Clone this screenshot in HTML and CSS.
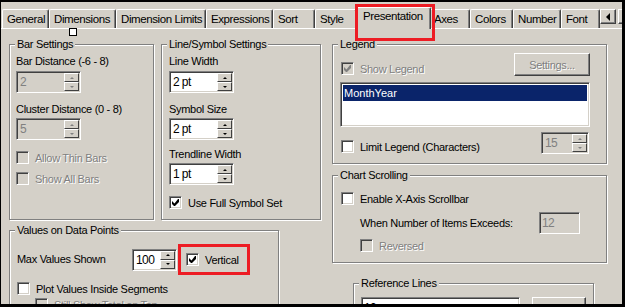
FILE: index.html
```html
<!DOCTYPE html>
<html lang="en">
<head>
    <meta charset="UTF-8">
    <title>Chart Properties - Presentation</title>
    <link rel="stylesheet" href="styles.css">
</head>
<body>
    <div class="window">
        <div class="tabs">
            <div class="tab">General</div>
            <div class="tab">Dimensions</div>
            <div class="tab">Dimension Limits</div>
            <div class="tab">Expressions</div>
            <div class="tab">Sort</div>
            <div class="tab">Style</div>
            <div class="tab active">Presentation</div>
            <div class="tab">Axes</div>
            <div class="tab">Colors</div>
            <div class="tab">Number</div>
            <div class="tab">Font</div>
            <div class="tab-scroll">
                <span class="scroll-btn"><span class="arrow-left"></span></span>
                <span class="scroll-btn"><span class="arrow-right"></span></span>
            </div>
        </div>
        <span class="handle"></span>

        <div class="panel">
            <div class="col-left">
                <div class="row-top">
                    <div class="group group-bar">
                        <span class="group-title">Bar Settings</span>
                        <div class="field-label">Bar Distance (-6 - 8)</div>
                        <div class="spin disabled mt3">
                            <span class="spin-value">2</span>
                            <span class="spin-btns"><span class="spin-up"></span><span class="spin-down"></span></span>
                        </div>
                        <div class="field-label mt10">Cluster Distance (0 - 8)</div>
                        <div class="spin disabled mt2">
                            <span class="spin-value">5</span>
                            <span class="spin-btns"><span class="spin-up"></span><span class="spin-down"></span></span>
                        </div>
                        <label class="check disabled mt11"><span class="box"></span>Allow Thin Bars</label>
                        <label class="check disabled mt8"><span class="box"></span>Show All Bars</label>
                    </div>

                    <div class="group group-line">
                        <span class="group-title">Line/Symbol Settings</span>
                        <div class="field-label">Line Width</div>
                        <div class="spin mt3">
                            <span class="spin-value">2 pt</span>
                            <span class="spin-btns"><span class="spin-up"></span><span class="spin-down"></span></span>
                        </div>
                        <div class="field-label mt10">Symbol Size</div>
                        <div class="spin mt2">
                            <span class="spin-value">2 pt</span>
                            <span class="spin-btns"><span class="spin-up"></span><span class="spin-down"></span></span>
                        </div>
                        <div class="field-label mt8">Trendline Width</div>
                        <div class="spin mt2">
                            <span class="spin-value">1 pt</span>
                            <span class="spin-btns"><span class="spin-up"></span><span class="spin-down"></span></span>
                        </div>
                        <label class="check mt11">
                            <span class="box"><svg class="tick" viewBox="0 0 7 7" width="7" height="7"><path d="M0 2v3l2 2h1l4-4V0h-1L2.5 4.5z"/></svg></span>Use Full Symbol Set
                        </label>
                    </div>
                </div>

                <div class="group group-values">
                    <span class="group-title">Values on Data Points</span>
                    <div class="values-row">
                        <span class="values-label">Max Values Shown</span>
                        <div class="spin spin-small">
                            <span class="spin-value">100</span>
                            <span class="spin-btns"><span class="spin-up"></span><span class="spin-down"></span></span>
                        </div>
                        <label class="check highlight">
                            <span class="box"><svg class="tick" viewBox="0 0 7 7" width="7" height="7"><path d="M0 2v3l2 2h1l4-4V0h-1L2.5 4.5z"/></svg></span>Vertical
                        </label>
                    </div>
                    <label class="check mt7"><span class="box"></span>Plot Values Inside Segments</label>
                    <label class="check disabled indent mt3"><span class="box"></span>Still Show Total on Top</label>
                </div>
            </div>

            <div class="col-right">
                <div class="group group-legend">
                    <span class="group-title">Legend</span>
                    <div class="legend-row">
                        <label class="check disabled legend-check">
                            <span class="box"><svg class="tick" viewBox="0 0 7 7" width="7" height="7"><path d="M0 2v3l2 2h1l4-4V0h-1L2.5 4.5z"/></svg></span>Show Legend
                        </label>
                        <button class="btn btn-settings" disabled>Settings...</button>
                    </div>
                    <div class="listbox">
                        <div class="list-item selected">MonthYear</div>
                    </div>
                    <div class="legend-row limit-row">
                        <label class="check limit-check"><span class="box"></span>Limit Legend (Characters)</label>
                        <div class="spin disabled spin-limit">
                            <span class="spin-value">15</span>
                            <span class="spin-btns"><span class="spin-up"></span><span class="spin-down"></span></span>
                        </div>
                    </div>
                </div>

                <div class="group group-scroll">
                    <span class="group-title">Chart Scrolling</span>
                    <label class="check"><span class="box"></span>Enable X-Axis Scrollbar</label>
                    <div class="scroll-row">
                        <span>When Number of Items Exceeds:</span>
                        <span class="textbox disabled items-box">12</span>
                    </div>
                    <label class="check disabled sub-check"><span class="box"></span>Reversed</label>
                </div>

                <div class="group group-ref">
                    <span class="group-title">Reference Lines</span>
                    <div class="ref-row">
                        <span class="textbox ref-box">10</span>
                        <button class="btn btn-add">Add</button>
                    </div>
                </div>
            </div>
        </div>
    </div>
</body>
</html>
```

FILE: styles.css
```css
* {
    box-sizing: border-box;
}
body {
    margin: 0;
    font-family: "Liberation Sans", Arial, sans-serif;
    font-size: 11px;
    letter-spacing: -0.3px;
    color: #000;
    background: #000;
}
.window {
    position: relative;
    width: 625px;
    height: 307px;
    overflow: hidden;
    background: #d4d0c8;
    border-style: solid;
    border-color: #000;
    border-width: 2px 3px 3px 1px;
}

/* tab strip */
.tabs {
    display: flex;
    align-items: flex-end;
    height: 26px;
    padding-left: 1px;
}
.tab {
    flex: none;
    height: 19px;
    padding: 0 0 0 4px;
    overflow: hidden;
    white-space: nowrap;
    line-height: 18px;
    font-size: 11.5px;
    letter-spacing: -0.4px;
    border-left: 1px solid #fff;
    border-top: 1px solid #fff;
    border-right: 1px solid #404040;
    border-radius: 2px 2px 0 0;
    box-shadow: inset -1px 0 #808080;
}
/* tab widths as drawn by the tab control */
.tab:nth-child(1) { width: 47px; }
.tab:nth-child(2) { width: 67px; }
.tab:nth-child(3) { width: 90px; }
.tab:nth-child(4) { width: 67px; }
.tab:nth-child(5) { width: 42px; }
.tab:nth-child(6) { width: 42px; }
.tab:nth-child(8) { width: 41px; }
.tab:nth-child(9) { width: 43px; }
.tab:nth-child(10) { width: 48px; }
.tab:nth-child(11) { width: 39px; }
.tab.active {
    position: relative;
    z-index: 1;
    width: 76px;
    height: 22px;
    margin: 0 -2px -1px;
    padding: 0 0 0 7px;
    overflow: visible;
    line-height: 16px;
    background: #d4d0c8;
}
.tab.active::after {
    content: "";
    position: absolute;
    left: -1px;
    top: -4px;
    width: 74px;
    height: 31px;
    border: 3px solid #ed1c24;
}
.tab-scroll {
    flex: none;
    display: flex;
    gap: 2px;
    align-self: flex-start;
    margin: 7px 0 0 0;
}
.scroll-btn {
    display: flex;
    align-items: center;
    justify-content: center;
    width: 16px;
    height: 15px;
    background: #d4d0c8;
    border: 1px solid;
    border-color: #fff #404040 #404040 #fff;
    box-shadow: inset -1px -1px #808080;
}
.arrow-left {
    border-top: 4px solid transparent;
    border-bottom: 4px solid transparent;
    border-right: 4px solid #000;
}
.arrow-right {
    border-top: 4px solid transparent;
    border-bottom: 4px solid transparent;
    border-left: 4px solid #000;
}
.handle {
    position: absolute;
    left: 68px;
    top: 26px;
    width: 8px;
    height: 8px;
    background: #fff;
    border: 1px solid #000;
    z-index: 2;
}

/* page */
.panel {
    display: flex;
    gap: 11px;
    padding: 15px 0 0 8px;
    border-top: 1px solid #fff;
}
.col-left {
    width: 312px;
    flex: none;
}
.col-right {
    width: 275px;
    flex: none;
}
.row-top {
    display: flex;
    gap: 7px;
}

/* group boxes */
.group {
    position: relative;
    border: 1px solid #808080;
    box-shadow: inset 1px 1px #fff, 1px 1px #fff;
}
.group-title {
    position: absolute;
    top: -7px;
    left: 5px;
    padding: 0 2px;
    line-height: 13px;
    background: #d4d0c8;
    white-space: nowrap;
}
.group-bar {
    width: 145px;
    height: 176px;
    padding: 10px 0 0 6px;
}
.group-line {
    width: 160px;
    height: 176px;
    padding: 10px 0 0 7px;
}
.group-values {
    width: 270px;
    height: 90px;
    margin-top: 10px;
    padding: 13px 0 0 7px;
}
.group-legend {
    height: 120px;
    padding: 8px 16px 0 8px;
}
.group-scroll {
    height: 88px;
    margin-top: 11px;
    padding: 16px 26px 0 8px;
}
.group-ref {
    width: 241px;
    height: 60px;
    margin: 20px 0 0 21px;
    padding: 13px 0 0 7px;
}

.mt2 { margin-top: 2px; }
.mt3 { margin-top: 3px; }
.mt7 { margin-top: 7px; }
.mt8 { margin-top: 8px; }
.mt10 { margin-top: 10px; }
.mt11 { margin-top: 11px; }

.field-label {
    line-height: 13px;
    white-space: nowrap;
}

/* checkboxes */
.check {
    display: flex;
    align-items: center;
    gap: 6px;
    height: 13px;
    white-space: nowrap;
}
.box {
    flex: none;
    display: flex;
    align-items: center;
    justify-content: center;
    width: 13px;
    height: 13px;
    background: #fff;
    border: 1px solid;
    border-color: #808080 #fff #fff #808080;
    box-shadow: inset 1px 1px #404040, inset -1px -1px #d4d0c8;
}
.tick {
    display: block;
    fill: #000;
}
.check.disabled {
    color: #808080;
    text-shadow: 1px 1px #fff;
}
.check.disabled .box {
    background: #d4d0c8;
}
.check.disabled .tick {
    fill: #808080;
}

/* spin / edit boxes */
.spin,
.textbox {
    display: flex;
    width: 65px;
    height: 22px;
    padding: 2px;
    background: #fff;
    border: 1px solid;
    border-color: #808080 #fff #fff #808080;
    box-shadow: inset 1px 1px #404040, inset -1px -1px #d4d0c8;
}
.spin-value,
.textbox {
    font-size: 12px;
    letter-spacing: -0.6px;
    line-height: 17px;
}
.spin-value {
    flex: 1;
    padding-left: 1px;
}
.spin.disabled,
.textbox.disabled {
    background: #d4d0c8;
    color: #808080;
}
.spin-btns {
    display: flex;
    flex-direction: column;
    width: 15px;
    height: 18px;
    margin: -1px -1px 0 0;
}
.spin-up,
.spin-down {
    display: flex;
    align-items: center;
    justify-content: center;
    height: 9px;
    background: #d4d0c8;
    border: 1px solid;
    border-color: #fff #404040 #404040 #fff;
}
.spin-up::after {
    content: "";
    border-left: 2px solid transparent;
    border-right: 2px solid transparent;
    border-bottom: 2px solid #000;
}
.spin-down::after {
    content: "";
    border-left: 2px solid transparent;
    border-right: 2px solid transparent;
    border-top: 2px solid #000;
}
.spin.disabled .spin-up::after {
    border-bottom-color: #808080;
}
.spin.disabled .spin-down::after {
    border-top-color: #808080;
}

/* values on data points */
.values-row {
    display: flex;
    align-items: center;
    height: 31px;
}
.values-label {
    width: 115px;
    line-height: 13px;
}
.spin-small {
    width: 45px;
}
.check.highlight {
    width: 72px;
    height: 31px;
    margin-left: 1px;
    padding: 0 0 0 5px;
    border: 3px solid #ed1c24;
}
.indent {
    margin-left: 18px;
}

/* legend */
.legend-row {
    display: flex;
    align-items: flex-start;
}
.legend-check {
    margin-top: 9px;
}
.btn {
    font-family: inherit;
    font-size: 11px;
    letter-spacing: -0.3px;
    color: #000;
    background: #d4d0c8;
    border: 1px solid;
    border-color: #fff #404040 #404040 #fff;
    box-shadow: inset -1px -1px #808080;
    padding: 0;
}
.btn:disabled {
    color: #808080;
    text-shadow: 1px 1px #fff;
}
.btn-settings {
    width: 76px;
    height: 23px;
    margin-left: auto;
}
.listbox {
    width: 250px;
    height: 45px;
    margin: 6px 0 0 -1px;
    padding: 2px;
    background: #fff;
    border: 1px solid;
    border-color: #808080 #fff #fff #808080;
    box-shadow: inset 1px 1px #404040, inset -1px -1px #d4d0c8;
}
.list-item {
    height: 16px;
    line-height: 16px;
    padding-left: 1px;
    letter-spacing: 0;
}
.list-item.selected {
    background: #0a246a;
    color: #fff;
}
.limit-row {
    margin-top: 5px;
}
.limit-check {
    margin-top: 8px;
}
.spin-limit {
    width: 48px;
    margin: 0 1px 0 auto;
}

/* chart scrolling */
.scroll-row {
    display: flex;
    align-items: center;
    margin: 7px 0 0 19px;
}
.items-box {
    width: 41px;
    margin-left: auto;
}
.sub-check {
    margin: 5px 0 0 19px;
}

/* reference lines */
.ref-row {
    display: flex;
    gap: 12px;
}
.ref-box {
    width: 159px;
}
.btn-add {
    width: 54px;
    height: 23px;
}
```
